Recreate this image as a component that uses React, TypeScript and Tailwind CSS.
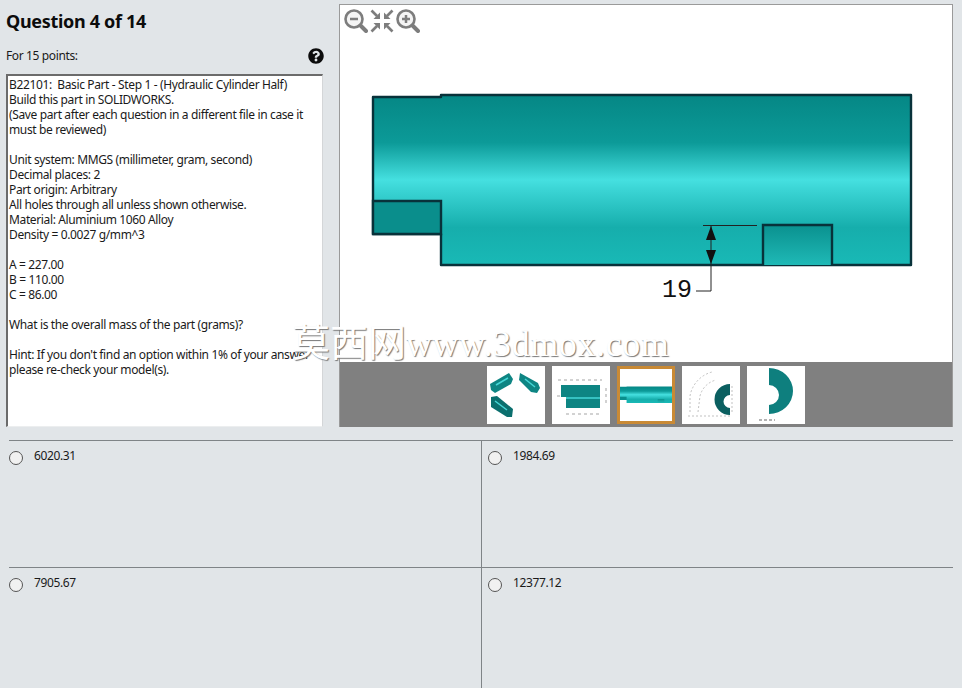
import { FaQuestionCircle } from 'react-icons/fa'

const QUESTION_TEXT = [
  'B22101:  Basic Part - Step 1 - (Hydraulic Cylinder Half)',
  'Build this part in SOLIDWORKS.',
  '(Save part after each question in a different file in case it',
  'must be reviewed)',
  '',
  'Unit system: MMGS (millimeter, gram, second)',
  'Decimal places: 2',
  'Part origin: Arbitrary',
  'All holes through all unless shown otherwise.',
  'Material: Aluminium 1060 Alloy',
  'Density = 0.0027 g/mm^3',
  '',
  'A = 227.00',
  'B = 110.00',
  'C = 86.00',
  '',
  'What is the overall mass of the part (grams)?',
  '',
  "Hint: If you don't find an option within 1% of your answer",
  'please re-check your model(s).',
].join('\n')

const ANSWERS = ['6020.31', '1984.69', '7905.67', '12377.12']

function ZoomIcon({ plus }: { plus?: boolean }) {
  return (
    <svg width="24" height="24" viewBox="0 0 24 24" fill="none">
      <circle cx="10" cy="10" r="8.5" stroke="#7d7d7d" strokeWidth="2.6" fill="#f4f4f4" />
      <path d="M16.5 16.5 L22 22" stroke="#7d7d7d" strokeWidth="4" strokeLinecap="round" />
      <path d="M6 10 H14" stroke="#7d7d7d" strokeWidth="2.5" />
      {plus && <path d="M10 6 V14" stroke="#7d7d7d" strokeWidth="2.5" />}
    </svg>
  )
}

function FitIcon() {
  return (
    <svg width="24" height="24" viewBox="0 0 24 24" fill="#7d7d7d" stroke="#7d7d7d">
      <path d="M1.5 1.5 L7 7" strokeWidth="2.6" />
      <path d="M10 10 V3.5 L3.5 10 Z" strokeWidth="0" />
      <path d="M22.5 1.5 L17 7" strokeWidth="2.6" />
      <path d="M14 10 V3.5 L20.5 10 Z" strokeWidth="0" />
      <path d="M1.5 22.5 L7 17" strokeWidth="2.6" />
      <path d="M10 14 V20.5 L3.5 14 Z" strokeWidth="0" />
      <path d="M22.5 22.5 L17 17" strokeWidth="2.6" />
      <path d="M14 14 V20.5 L20.5 14 Z" strokeWidth="0" />
    </svg>
  )
}

function PartDrawing() {
  return (
    <svg width="612" height="357" viewBox="340 5 612 357" className="block">
      <defs>
        <linearGradient id="body" gradientUnits="userSpaceOnUse" x1="0" y1="95" x2="0" y2="265">
          <stop offset="0" stopColor="#058785" />
          <stop offset="0.28" stopColor="#0c9a98" />
          <stop offset="0.5" stopColor="#45e0e0" />
          <stop offset="0.56" stopColor="#3ad4d4" />
          <stop offset="0.78" stopColor="#16aeac" />
          <stop offset="1" stopColor="#19b9b6" />
        </linearGradient>
        <linearGradient id="slot" gradientUnits="userSpaceOnUse" x1="0" y1="225" x2="0" y2="265">
          <stop offset="0" stopColor="#0a918f" />
          <stop offset="1" stopColor="#1fb9b6" />
        </linearGradient>
      </defs>
      <path d="M373 97 H441 V95 H911 V265 H441 V234 H373 Z" fill="url(#body)" stroke="#08323a" strokeWidth="2.4" strokeLinejoin="round" />
      <path d="M373 201 H441 V234 H373 Z" fill="#0a8e8c" stroke="#08323a" strokeWidth="2.4" />
      <path d="M763 265 V225 H832 V265" fill="url(#slot)" stroke="#08323a" strokeWidth="2.4" />
      <path d="M703 225.5 H757 M711 225 V291 H696" stroke="#222" strokeWidth="1" fill="none" />
      <path d="M711 226 L706 240 H716 Z M711 264 L706 250 H716 Z" fill="#111" />
      <text x="662" y="297" fontSize="25" fill="#111" className="font-['Liberation_Mono',monospace] tracking-normal">19</text>
    </svg>
  )
}

function ThumbViews() {
  return (
    <svg viewBox="0 0 58 58" className="block w-full h-full blur-[0.5px]">
      <path d="M3 18 L22 7 L26 13 L24 18 L8 27 L4 24 Z" fill="#0e8583" />
      <path d="M33 7 L51 17 L53 22 L50 27 L44 26 L32 14 Z" fill="#0e8583" />
      <path d="M4 31 L10 30 L26 43 L25 51 L20 51 L4 41 Z" fill="#0b6f6e" />
      <path d="M9 19 L21 12 M38 13 L48 21 M8 35 L20 44" stroke="#45d6d6" strokeWidth="1.5" />
    </svg>
  )
}

function ThumbSide() {
  return (
    <svg viewBox="0 0 58 58" className="block w-full h-full blur-[0.5px]">
      <path d="M9 19 H48 V42 H14 V31 H9 Z" fill="#0e8583" />
      <path d="M14 32 H48" stroke="#45d6d6" strokeWidth="1.5" />
      <path d="M6 14 H50 M14 48 H48 M5 30 H8 M54 22 V38" stroke="#a5a5a5" strokeWidth="1" strokeDasharray="3 3" />
    </svg>
  )
}

function ThumbCurrent() {
  return (
    <svg viewBox="373 40 538 286" className="block w-full h-full blur-[0.3px]" preserveAspectRatio="xMidYMid meet">
      <path d="M373 97 H441 V95 H911 V265 H441 V234 H373 Z" fill="url(#body)" />
      <path d="M373 201 H441 V234 H373 Z" fill="#0a8e8c" />
      <rect x="763" y="225" width="69" height="40" fill="url(#slot)" />
    </svg>
  )
}

function ThumbSection() {
  return (
    <svg viewBox="0 0 58 58" className="block w-full h-full blur-[0.4px]">
      <path d="M48 18 A15.5 15.5 0 0 0 48 49 L48 42 A6.5 6.5 0 0 1 48 29 Z" fill="#0b5f60" />
      <path d="M8 46 L8 30 A30 30 0 0 1 30 6 M16 46 L18 30 A22 22 0 0 1 34 14 M6 50 H50 M50 20 V48" stroke="#a8a8a8" strokeWidth="0.7" fill="none" strokeDasharray="2 2" />
    </svg>
  )
}

function ThumbFan() {
  return (
    <svg viewBox="0 0 58 58" className="block w-full h-full blur-[0.4px]">
      <path d="M22 2 A24 23 0 0 1 22 48 L22 39 A10 10 0 0 0 22 19 Z" fill="#0e7f7e" />
      <path d="M12 54 H28" stroke="#9a9a9a" strokeWidth="1.5" strokeDasharray="3 2" />
    </svg>
  )
}

const THUMBS = [
  { id: 'views', view: <ThumbViews />, selected: false },
  { id: 'side', view: <ThumbSide />, selected: false },
  { id: 'current', view: <ThumbCurrent />, selected: true },
  { id: 'section', view: <ThumbSection />, selected: false },
  { id: 'fan', view: <ThumbFan />, selected: false },
]

function Answer({ value, divided }: { value: string; divided: boolean }) {
  return (
    <label className={`flex items-start h-[126px] border-[#7f8487] ${divided ? 'border-r' : ''}`}>
      <input type="radio" name="answer" className="appearance-none shrink-0 w-[14px] h-[14px] mt-[10px] rounded-full border border-[#555] bg-[#f1f1f1]" />
      <span className="ml-[11px] mt-[7px] leading-[15px]">{value}</span>
    </label>
  )
}

export default function App() {
  return (
    <div className="relative w-[962px] h-[688px] overflow-hidden bg-[#e1e5e8] text-[12px] text-[#1a1a1a] font-['Noto_Sans','Open_Sans',sans-serif] tracking-[-0.37px]">
      <div className="flex pt-[4px] pl-[6px] h-[427px]">
        <div className="flex flex-col w-[317px]">
          <h1 className="text-[18px] leading-[24px] mt-[5px] font-bold text-[#0c0c0c] tracking-[-0.32px]">Question 4 of 14</h1>
          <div className="flex items-center justify-between mt-[11px] h-[24px]">
            <span>For 15 points:</span>
            <FaQuestionCircle className="text-[16px] text-[#0c0c0c] mr-[-1px]" />
          </div>
          <div className="flex-1 mt-[6px] pl-[1px] pt-[1px] bg-white border-2 border-r border-b border-t-[#6b6b6b] border-l-[#6b6b6b] border-r-[#d4d6d8] border-b-[#eceeef]">
            <p className="whitespace-pre-wrap leading-[15px]">{QUESTION_TEXT}</p>
          </div>
        </div>
        <div className="flex flex-col ml-[16px] w-[614px] border border-[#9a9a9a] border-b-0">
          <div className="relative bg-white h-[357px]">
            <PartDrawing />
            <div className="absolute left-[4px] top-[4px] flex gap-[2px]">
              <ZoomIcon />
              <FitIcon />
              <ZoomIcon plus />
            </div>
          </div>
          <div className="flex flex-1 items-center justify-center gap-[7px] bg-[#808080]">
            {THUMBS.map((t) => (
              <div key={t.id} className={`w-[58px] h-[58px] bg-white ${t.selected ? 'border-[3px] border-[#c98a35]' : ''}`}>
                {t.view}
              </div>
            ))}
          </div>
        </div>
      </div>

      <div className="grid grid-cols-[473px_471px] ml-[9px] mt-[13px] w-[944px]">
        {ANSWERS.map((a, i) => (
          <div key={a} className={`border-t border-[#7f8487] ${i % 2 === 1 ? 'pl-[6px]' : ''}`}>
            <Answer value={a} divided={i % 2 === 0} />
          </div>
        ))}
      </div>

      <div className="absolute left-[292px] top-[315px] flex items-baseline whitespace-nowrap text-white tracking-normal [text-shadow:1px_1px_1px_#777]">
        <span className="text-[38px] leading-[50px] font-['Noto_Sans_CJK_SC',sans-serif]">莫西网</span>
        <span className="text-[36px] leading-[50px] tracking-[0.6px] font-['Liberation_Serif',serif]">www.3dmox.com</span>
      </div>
    </div>
  )
}
